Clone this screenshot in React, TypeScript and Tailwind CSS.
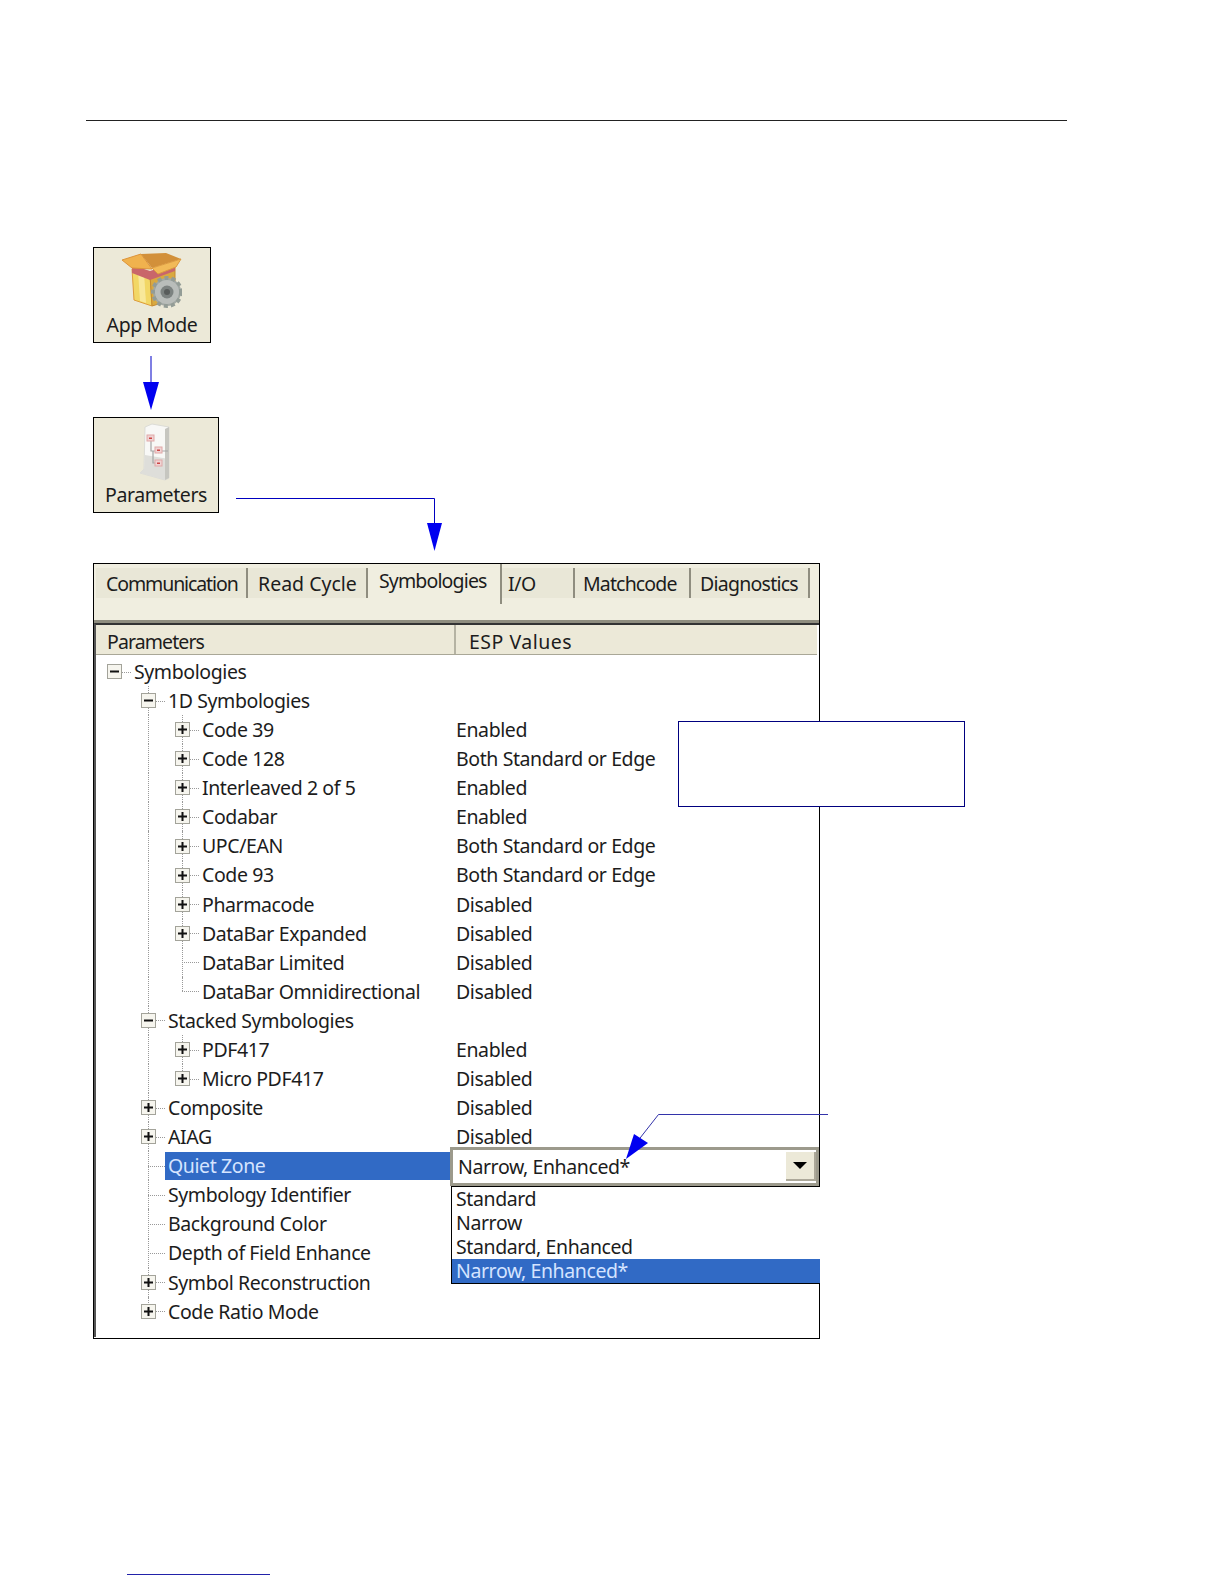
import React from 'react';

type TreeRow = {
  label: string;
  value?: string;
  level: 0 | 1 | 2;
  box?: '+' | '-';
  last?: boolean;
  selected?: boolean;
};

const rows: TreeRow[] = [
  { label: 'Symbologies', level: 0, box: '-' },
  { label: '1D Symbologies', level: 1, box: '-' },
  { label: 'Code 39', value: 'Enabled', level: 2, box: '+' },
  { label: 'Code 128', value: 'Both Standard or Edge', level: 2, box: '+' },
  { label: 'Interleaved 2 of 5', value: 'Enabled', level: 2, box: '+' },
  { label: 'Codabar', value: 'Enabled', level: 2, box: '+' },
  { label: 'UPC/EAN', value: 'Both Standard or Edge', level: 2, box: '+' },
  { label: 'Code 93', value: 'Both Standard or Edge', level: 2, box: '+' },
  { label: 'Pharmacode', value: 'Disabled', level: 2, box: '+' },
  { label: 'DataBar Expanded', value: 'Disabled', level: 2, box: '+' },
  { label: 'DataBar Limited', value: 'Disabled', level: 2 },
  { label: 'DataBar Omnidirectional', value: 'Disabled', level: 2, last: true },
  { label: 'Stacked Symbologies', level: 1, box: '-' },
  { label: 'PDF417', value: 'Enabled', level: 2, box: '+' },
  { label: 'Micro PDF417', value: 'Disabled', level: 2, box: '+', last: true },
  { label: 'Composite', value: 'Disabled', level: 1, box: '+' },
  { label: 'AIAG', value: 'Disabled', level: 1, box: '+' },
  { label: 'Quiet Zone', level: 1, selected: true },
  { label: 'Symbology Identifier', level: 1 },
  { label: 'Background Color', level: 1 },
  { label: 'Depth of Field Enhance', level: 1 },
  { label: 'Symbol Reconstruction', level: 1, box: '+' },
  { label: 'Code Ratio Mode', level: 1, box: '+', last: true },
];

const tabs = [
  { label: 'Communication', cls: 'w-[152px] pl-[10px] tracking-[-1.1px]' },
  { label: 'Read Cycle', cls: 'w-[120px] pl-[10px] tracking-[0px]' },
  { label: 'Symbologies', cls: 'w-[134px] pl-[11px] tracking-[-0.85px]', active: true },
  { label: 'I/O', cls: 'w-[73px] pl-[6px]' },
  { label: 'Matchcode', cls: 'w-[116px] pl-[8px] tracking-[-0.85px]' },
  { label: 'Diagnostics', cls: 'w-[119px] pl-[9px] tracking-[-0.75px]' },
];

const options = ['Standard', 'Narrow', 'Standard, Enhanced', 'Narrow, Enhanced*'];

const Expander = ({ kind }: { kind: '+' | '-' }) => (
  <svg width="15" height="15" viewBox="0 0 15 15" className="relative">
    <rect x="0.5" y="0.5" width="14" height="14" fill="#f6f5ee" stroke="#a3a39a" />
    <rect x="3" y="6.5" width="9" height="2" fill="#111" />
    {kind === '+' && <rect x="6.5" y="3" width="2" height="9" fill="#111" />}
  </svg>
);

const GuideCell = () => (
  <div className="relative h-full w-[34px] shrink-0">
    <div className="absolute left-[17px] top-0 h-full border-l border-dotted border-[#999]" />
  </div>
);

// tree column holding the connector and the expander
const NodeCell = ({ box, stem, last }: { box?: '+' | '-'; stem: boolean; last?: boolean }) => (
  <div className="relative flex h-full w-[34px] shrink-0 items-center justify-center">
    {stem && (
      <div
        className={
          last
            ? 'absolute left-[17px] top-0 h-1/2 border-l border-dotted border-[#999]'
            : 'absolute left-[17px] top-0 h-full border-l border-dotted border-[#999]'
        }
      />
    )}
    <div className="absolute left-[17px] right-0 top-1/2 border-t border-dotted border-[#999]" />
    {box && <Expander kind={box} />}
  </div>
);

const Row = ({ row }: { row: TreeRow }) => (
  <div className="flex h-[29.09px] items-center">
    <div className="flex h-full w-[359px] shrink-0 items-center">
      {row.level === 0 ? <NodeCell box={row.box} stem={false} /> : <div className="h-full w-[34px] shrink-0" />}
      {row.level === 1 && <NodeCell box={row.box} stem last={row.last} />}
      {row.level === 2 && <GuideCell />}
      {row.level === 2 && <NodeCell box={row.box} stem last={row.last} />}
      <div
        className={
          row.selected
            ? 'flex h-[28px] flex-1 items-center bg-[#316ac5] pl-[3px] text-[#d5e4ff]'
            : 'flex h-[28px] flex-1 items-center pl-[3px]'
        }
      >
        {row.label}
      </div>
    </div>
    {row.value && <div>{row.value}</div>}
  </div>
);

const AppModeIcon = () => (
  <svg width="60" height="58" viewBox="0 0 60 58">
    <path d="M10 16 L28 22 L30 53 L12 47 Z" fill="#f2d765" stroke="#dd9c3c" />
    <path d="M16 18 L22 20 L24 50 L18 48 Z" fill="#f8e89a" />
    <path d="M28 22 L53 14 L53 46 L30 53 Z" fill="#d9a93f" stroke="#c48a30" />
    <path d="M10 12 L28 18 L53 10 L53 18 L28 27 L10 20 Z" fill="#c9666a" />
    <path d="M0 7 L19 1 L30 16 L10 15 Z" fill="#f0b24e" stroke="#dc933a" />
    <path d="M19 1 L44 0 L59 6 L30 15 Z" fill="#d2903a" />
    <path d="M30 15 L59 6 L54 14 L36 21 Z" fill="#f2ba58" stroke="#dc9a40" />
    <g transform="translate(45 39)">
      <circle r="14" fill="#a2a8a4" stroke="#939c96" strokeWidth="4" strokeDasharray="4 3" />
      <circle r="12" fill="#b9bdba" />
      <circle r="6.5" fill="#7c8280" />
      <circle r="3" fill="#585c5b" />
    </g>
  </svg>
);

const ParametersIcon = () => (
  <svg width="34" height="58" viewBox="0 0 34 58">
    <path d="M6 4 L13 1 L30 4 L30 55 L26 57 L1 50 L5 46 Z" fill="#f8f8f6" stroke="#dcdcd6" />
    <path d="M6 32 L30 36 L30 55 L26 57 L1 50 L5 46 Z" fill="#dededa" />
    <path d="M26 6 L30 4 L30 55 L26 57 Z" fill="#c6c6c0" />
    <path d="M12 18 V28 H16 M14 28 V40 H16 M23 28 H29" fill="none" stroke="#a5a5a5" strokeWidth="1.2" />
    <rect x="8" y="12" width="7" height="6" fill="#f0d4d4" stroke="#e0a8a8" />
    <rect x="10" y="14.5" width="3" height="1.5" fill="#c44" />
    <rect x="16" y="24" width="7" height="6" fill="#f0d4d4" stroke="#e0a8a8" />
    <rect x="18" y="26.5" width="3" height="1.5" fill="#c44" />
    <rect x="16" y="37" width="7" height="6" fill="#f0d4d4" stroke="#e0a8a8" />
    <rect x="18" y="39.5" width="3" height="1.5" fill="#c44" />
  </svg>
);

const App: React.FC = () => {
  return (
    <div className="flex h-[1584px] w-[1224px] flex-col overflow-hidden bg-white font-['Noto_Sans',sans-serif] text-[19.5px] tracking-[-0.4px] text-[#1c1c1c]">
      <div className="ml-[86px] mt-[120px] h-px w-[981px] shrink-0 bg-[#222]" />

      <div className="ml-[93px] mt-[126px] flex h-[96px] w-[118px] shrink-0 flex-col items-center border border-black bg-[#ece9d8] pt-[5px]">
        <AppModeIcon />
        <div className="mt-[1px] leading-[26px]">App Mode</div>
      </div>

      <svg width="20" height="54" viewBox="0 0 20 54" className="ml-[141px] mt-[13px] shrink-0">
        <rect x="9.5" y="0" width="1" height="28" fill="#0000c8" />
        <path d="M2 26 H18 L10 54 Z" fill="#0000f0" />
      </svg>

      <div className="ml-[93px] mt-[7px] flex h-[134px] shrink-0 items-start">
        <div className="flex h-[96px] w-[126px] shrink-0 flex-col items-center border border-black bg-[#ece9d8] pt-[5px]">
          <ParametersIcon />
          <div className="mt-[1px] leading-[26px]">Parameters</div>
        </div>
        <svg width="210" height="54" viewBox="0 0 210 54" className="ml-[17px] mt-[80px] shrink-0">
          <path d="M0 1.5 H198.5 V28" fill="none" stroke="#0000c0" strokeWidth="1" />
          <path d="M191 26 H206 L198.5 54 Z" fill="#0000f0" />
        </svg>
      </div>

      <div className="relative ml-[93px] mt-[12px] h-[776px] w-[727px] shrink-0 border border-black bg-white">
        <div className="h-[59px] border-b-[3px] border-[#8f8d7f] bg-[#f0eee0]">
          <div className="ml-[2px] flex items-start">
            {tabs.map((t) => (
              <div
                key={t.label}
                className={
                  t.active
                    ? `${t.cls} h-[40px] border-r-2 border-[#8f8d7f] bg-[#f0eee0] pt-[1px] leading-[32px]`
                    : `${t.cls} mt-[4px] h-[30px] border-r-2 border-[#8f8d7f] bg-[#e9e7d7] leading-[32px]`
                }
              >
                {t.label}
              </div>
            ))}
          </div>
        </div>
        <div className="h-[714px] border-l-[2px] border-t-[2px] border-l-[#555] border-t-[#333] bg-white">
          <div className="mr-[2px] h-[30px] border-b border-[#a9a797] bg-[#ece9d8] leading-[34px]">
            <div className="flex h-full">
              <div className="h-full w-[360px] border-r-2 border-[#b5b3a3] pl-[11px] tracking-[-0.9px]">Parameters</div>
              <div className="pl-[13px] tracking-[0.5px]">ESP Values</div>
            </div>
          </div>
          <div className="pl-px pt-[2px]">
            {rows.map((row) => (
              <Row key={row.label} row={row} />
            ))}
          </div>
        </div>

        {/* open combo box over the value column */}
        <div className="absolute left-[356px] top-[583px] flex h-[39px] w-[369px] items-center border-[3px] border-[#9c9a8c] bg-white pl-[5px]">
          <span className="flex-1">Narrow, Enhanced*</span>
          <div className="flex h-[29px] w-[30px] items-center justify-center border-b-2 border-r-2 border-[#aca899] bg-[#ece9d8]">
            <div className="h-0 w-0 border-l-[7px] border-r-[7px] border-t-[7px] border-l-transparent border-r-transparent border-t-black" />
          </div>
        </div>
        <div className="absolute left-[357px] top-[622px] w-[369px] border-y border-l border-black bg-white leading-[24px]">
          {options.map((o, i) => (
            <div key={o} className={i === 3 ? 'bg-[#316ac5] pl-[4px] text-[#d5e4ff]' : 'pl-[4px]'}>
              {o}
            </div>
          ))}
        </div>

        {/* blank callout covering the panel edge */}
        <div className="absolute left-[584px] top-[157px] h-[86px] w-[287px] border border-[#00007f] bg-white" />

        <svg width="210" height="50" viewBox="0 0 210 50" className="absolute left-[527px] top-[547px]">
          <path d="M207 3.5 H37.5 L12 36" fill="none" stroke="#3333aa" strokeWidth="1" />
          <path d="M5 48 L13 23 L27 32 Z" fill="#0000f0" />
        </svg>
      </div>

      <div className="ml-[127px] mt-[235px] h-px w-[143px] shrink-0 bg-[#2222aa]" />
    </div>
  );
};

export default App;
